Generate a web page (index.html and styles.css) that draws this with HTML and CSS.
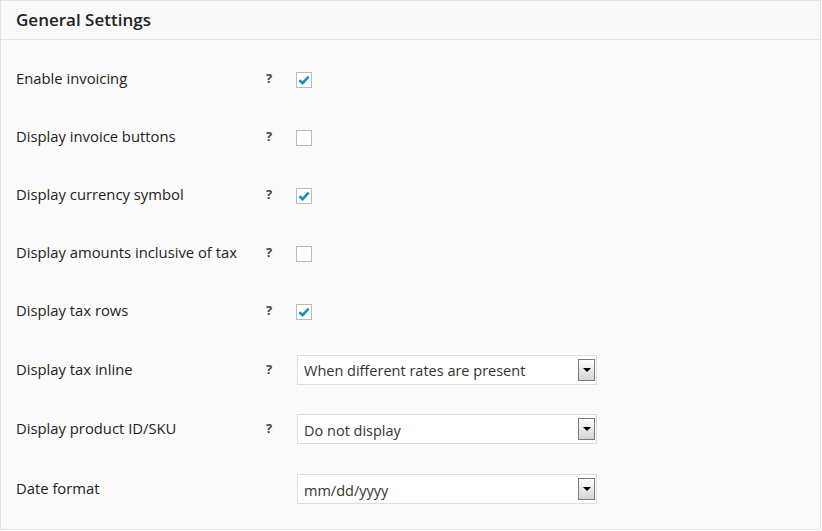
FILE: index.html
```html
<!DOCTYPE html>
<html>
<head>
<meta charset="utf-8">
<link rel="stylesheet" href="styles.css">
</head>
<body>
<div class="panel">
  <div class="panel-head"><h2 class="title">General Settings</h2></div>
  <div class="panel-body">
    <div class="row"><div class="label">Enable invoicing</div><div class="help">?</div><div class="field"><span class="cb checked"><svg viewBox="0 0 16 16" width="16" height="16"><path d="M3.5 8.2 L6.6 11.2 L12.6 4.6" fill="none" stroke="#1e8cbe" stroke-width="2.6"/></svg></span></div></div>
    <div class="row"><div class="label">Display invoice buttons</div><div class="help">?</div><div class="field"><span class="cb"></span></div></div>
    <div class="row"><div class="label">Display currency symbol</div><div class="help">?</div><div class="field"><span class="cb checked"><svg viewBox="0 0 16 16" width="16" height="16"><path d="M3.5 8.2 L6.6 11.2 L12.6 4.6" fill="none" stroke="#1e8cbe" stroke-width="2.6"/></svg></span></div></div>
    <div class="row"><div class="label">Display amounts inclusive of tax</div><div class="help">?</div><div class="field"><span class="cb"></span></div></div>
    <div class="row"><div class="label">Display tax rows</div><div class="help">?</div><div class="field"><span class="cb checked"><svg viewBox="0 0 16 16" width="16" height="16"><path d="M3.5 8.2 L6.6 11.2 L12.6 4.6" fill="none" stroke="#1e8cbe" stroke-width="2.6"/></svg></span></div></div>
    <div class="row row-sel"><div class="label">Display tax inline</div><div class="help">?</div><div class="field"><div class="select"><span class="sel-text">When different rates are present</span><span class="sel-btn"><span class="arrow"></span></span></div></div></div>
    <div class="row row-sel tall"><div class="label">Display product ID/SKU</div><div class="help">?</div><div class="field"><div class="select"><span class="sel-text">Do not display</span><span class="sel-btn"><span class="arrow"></span></span></div></div></div>
    <div class="row row-sel tall"><div class="label">Date format</div><div class="help"></div><div class="field"><div class="select"><span class="sel-text">mm/dd/yyyy</span><span class="sel-btn"><span class="arrow"></span></span></div></div></div>
  </div>
</div>
</body>
</html>
```
FILE: styles.css
```css
html, body {
  margin: 0;
  padding: 0;
  background: #fff;
}
body {
  font-family: "Open Sans", "Noto Sans", sans-serif;
  color: #222;
}
.panel {
  width: 819px;
  height: 528px;
  border: 1px solid #e2e2e2;
  background: #fbfbfb;
  box-sizing: content-box;
}
.panel-head {
  height: 38px;
  border-bottom: 1px solid #e2e2e2;
  background: #f9f9f9;
  display: flex;
  align-items: center;
  padding-left: 15px;
}
.title {
  margin: 0;
  font-size: 17px;
  font-weight: 600;
  color: #222;
  line-height: 1;
  position: relative;
  top: -1px;
}
.panel-body {
  padding-top: 10px;
}
.row {
  display: flex;
  align-items: center;
  height: 58px;
}
.row.row-sel {
  height: 59px;
}
.row.tall {
  height: 60px;
}
.label {
  width: 250px;
  padding-left: 15px;
  font-size: 14.8px;
  color: #222;
  position: relative;
  top: -1px;
}
.help {
  width: 30px;
  font-size: 13px;
  font-weight: 700;
  color: #444;
  position: relative;
  top: -1px;
}
.field {
  display: flex;
  align-items: center;
}
.cb {
  display: block;
  width: 14px;
  height: 14px;
  border: 1px solid #bbb;
  background: #fff;
  margin-left: 0;
  position: relative;
  top: 1px;
}
.cb svg {
  display: block;
  margin: -1px 0 0 -1px;
}
.select {
  margin-left: 1px;
  width: 298px;
  height: 28px;
  border: 1px solid #ddd;
  background: #fff;
  display: flex;
  align-items: center;
  justify-content: space-between;
  box-sizing: content-box;
}
.sel-text {
  font-size: 14.5px;
  color: #333;
  padding-left: 6px;
  position: relative;
  top: 1px;
}
.sel-btn {
  width: 15px;
  height: 20px;
  border: 1px solid #7a7a7a;
  margin-right: 1px;
  background: linear-gradient(#ffffff, #d4d4d4);
  display: flex;
  align-items: center;
  justify-content: center;
}
.arrow {
  width: 0;
  height: 0;
  border-left: 4px solid transparent;
  border-right: 4px solid transparent;
  border-top: 4px solid #000;
}
```
